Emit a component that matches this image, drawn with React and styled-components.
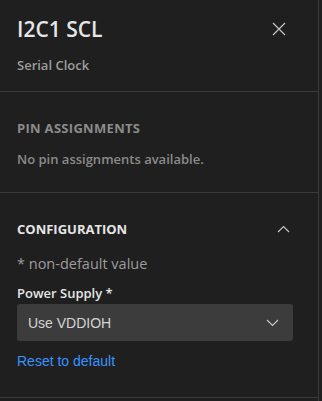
import React from 'react'
import styled, { createGlobalStyle } from 'styled-components'

const GlobalStyle = createGlobalStyle`
  html, body {
    margin: 0;
    padding: 0;
    background: #1f1f1f;
  }
  body {
    font-family: "Open Sans", "Noto Sans", sans-serif;
  }
`

const CloseIcon = () => (
  <svg width="14" height="14" viewBox="0 0 14 14" fill="none">
    <path d="M1 1L13 13M13 1L1 13" stroke="#c5c5c5" strokeWidth="1.2" />
  </svg>
)

const ChevronUp = () => (
  <svg width="13" height="8" viewBox="0 0 13 8" fill="none">
    <path d="M1 7L6.5 1.5L12 7" stroke="#c5c5c5" strokeWidth="1.2" />
  </svg>
)

const ChevronDown = () => (
  <svg width="13" height="8" viewBox="0 0 13 8" fill="none">
    <path d="M1 1L6.5 6.5L12 1" stroke="#c5c5c5" strokeWidth="1.2" />
  </svg>
)

const App = () => {
  return (
    <>
      <GlobalStyle />
      <Panel>
        <Header>
          <HeaderRow>
            <Title>I2C1 SCL</Title>
            <IconButton aria-label="Close"><CloseIcon /></IconButton>
          </HeaderRow>
          <Subtitle>Serial Clock</Subtitle>
        </Header>

        <Section>
          <SectionTitle dim>PIN ASSIGNMENTS</SectionTitle>
          <Muted>No pin assignments available.</Muted>
        </Section>

        <Section tall>
          <SectionHead>
            <SectionTitle>CONFIGURATION</SectionTitle>
            <SmallButton aria-label="Collapse"><ChevronUp /></SmallButton>
          </SectionHead>
          <Note>* non-default value</Note>
          <FieldLabel>Power Supply *</FieldLabel>
          <Select>
            <span>Use VDDIOH</span>
            <ChevronDown />
          </Select>
          <ResetLink>Reset to default</ResetLink>
        </Section>
      </Panel>
    </>
  )
}

const Panel = styled.div`
  width: 319px;
  min-height: 401px;
  box-sizing: border-box;
  background: #1f1f1f;
  border-right: 1px solid #3a3a3a;
`

const Header = styled.header`
  padding: 14px 25px 16px 17px;
  border-bottom: 1px solid #3a3a3a;
`

const HeaderRow = styled.div`
  display: flex;
  align-items: center;
  justify-content: space-between;
`

const Title = styled.h1`
  margin: 0;
  font-size: 21px;
  line-height: 30px;
  font-weight: 600;
  color: #e6e6e6;
`

const IconButton = styled.button`
  width: 28px;
  height: 28px;
  display: flex;
  align-items: center;
  justify-content: center;
  padding: 0;
  border: 0;
  background: transparent;
  cursor: pointer;
`

const Subtitle = styled.div`
  margin-top: 11px;
  font-size: 13px;
  line-height: 20px;
  font-weight: 600;
  color: #9d9d9d;
`

const Section = styled.section`
  padding: 26px 25px ${(p) => (p.tall ? '26px' : '23px')} 17px;
  border-bottom: 1px solid #3a3a3a;
`

const SectionHead = styled.div`
  display: flex;
  align-items: center;
  justify-content: space-between;
`

const SectionTitle = styled.h2`
  margin: 0;
  font-size: 13px;
  line-height: 20px;
  font-weight: 700;
  letter-spacing: ${(p) => (p.dim ? '0.3px' : '0')};
  color: ${(p) => (p.dim ? '#8b8b8b' : '#e6e6e6')};
`

const SmallButton = styled(IconButton)`
  width: 20px;
  height: 20px;
`

const Muted = styled.p`
  margin: 11px 0 0;
  font-size: 13px;
  line-height: 20px;
  font-weight: 600;
  color: #8b8b8b;
`

const Note = styled.p`
  margin: 15px 0 0;
  font-size: 14.5px;
  line-height: 20px;
  color: #9d9d9d;
`

const FieldLabel = styled.div`
  margin-top: 9px;
  font-size: 13px;
  line-height: 20px;
  font-weight: 600;
  color: #e6e6e6;
`

const Select = styled.div`
  margin-top: 1px;
  height: 37px;
  display: flex;
  align-items: center;
  justify-content: space-between;
  padding: 0 14px 0 11px;
  border-radius: 3px;
  background: #3c3c3c;
  font-family: "Liberation Sans", Arial, sans-serif;
  font-size: 14px;
  color: #d4d4d4;
`

const ResetLink = styled.a`
  display: inline-block;
  margin-top: 10px;
  font-family: "Liberation Sans", Arial, sans-serif;
  font-size: 14px;
  line-height: 20px;
  color: #3794ff;
  cursor: pointer;
`

export default App
